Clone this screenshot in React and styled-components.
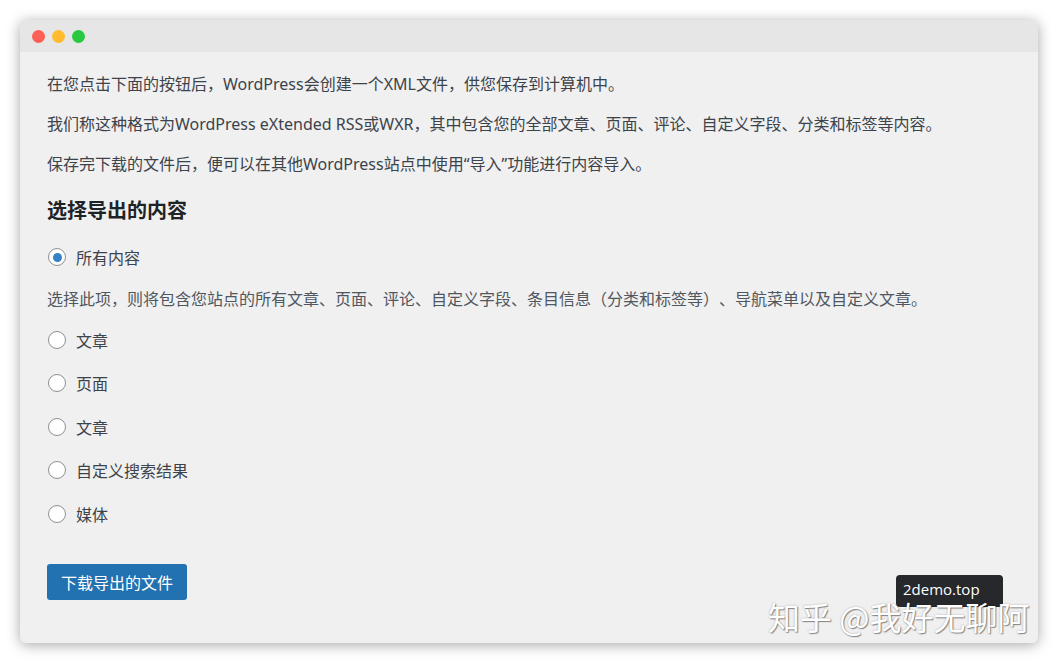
import React from "react";
import styled, { createGlobalStyle } from "styled-components";

const GlobalStyle = createGlobalStyle`
  html, body {
    margin: 0;
    padding: 0;
    background: #ffffff;
  }
  body {
    font-family: "Noto Sans", "Noto Sans CJK SC", sans-serif;
    color: #3c434a;
    text-spacing-trim: space-all;
  }
`;

const Page = styled.div`
  position: relative;
  width: 1058px;
  height: 663px;
  padding: 20px;
  box-sizing: border-box;
  overflow: hidden;
`;

const Window = styled.div`
  display: flex;
  flex-direction: column;
  height: 623px;
  background: #f0f0f1;
  border-radius: 6px;
  overflow: hidden;
  box-shadow: 0 2px 14px rgba(0, 0, 0, 0.35);
`;

const TitleBar = styled.div`
  display: flex;
  align-items: center;
  gap: 7px;
  height: 32px;
  padding-left: 12px;
  background: #e6e6e6;
  flex-shrink: 0;
`;

const Dot = styled.span`
  width: 13px;
  height: 13px;
  border-radius: 50%;
  background: ${(p) => p.color};
`;

const Content = styled.div`
  display: flex;
  flex-direction: column;
  padding: 20px 27px 0;
`;

const Para = styled.p`
  margin: 0 0 16px;
  font-size: 16px;
  line-height: 24px;
  color: #3c434a;
`;

const Heading = styled.h2`
  margin: 4px 0 19px;
  font-size: 20px;
  line-height: 30px;
  font-weight: 700;
  color: #1d2327;
`;

const RadioList = styled.div`
  display: flex;
  flex-direction: column;
  gap: 19.6px;
`;

const RadioRow = styled.label`
  display: flex;
  align-items: center;
  gap: 10px;
  height: 24px;
  padding-left: 1px;
  font-size: 16px;
  color: #3c434a;
`;

const RadioCircle = styled.span`
  position: relative;
  width: 18px;
  height: 18px;
  box-sizing: border-box;
  border: 1px solid #8c8f94;
  border-radius: 50%;
  background: #ffffff;
  flex-shrink: 0;

  &::after {
    content: "";
    display: ${(p) => (p.checked ? "block" : "none")};
    position: absolute;
    left: 3.5px;
    top: 3.5px;
    width: 9px;
    height: 9px;
    border-radius: 50%;
    background: #3582c4;
  }
`;

const Description = styled.p`
  margin: -2px 0 -2.5px;
  font-size: 16px;
  line-height: 24px;
  color: #50575e;
`;

const Button = styled.button`
  align-self: flex-start;
  margin-top: 38px;
  height: 36px;
  padding: 0 14px;
  border: 0;
  border-radius: 3px;
  background: #2271b1;
  color: #ffffff;
  font-family: inherit;
  font-size: 16px;
  cursor: pointer;
`;

const Tooltip = styled.div`
  position: absolute;
  left: 896px;
  top: 575px;
  width: 107px;
  height: 32px;
  box-sizing: border-box;
  padding: 3px 7px;
  background: #26282c;
  border-radius: 4px;
  color: #ffffff;
  font-family: "Open Sans", "Noto Sans", sans-serif;
  font-size: 15px;
  line-height: 22px;
`;

const Watermark = styled.div`
  position: absolute;
  left: 768px;
  top: 596px;
  font-family: "Noto Sans CJK SC", sans-serif;
  font-size: 32px;
  line-height: 40px;
  color: #ffffff;
  white-space: pre;
  text-shadow: 1px 1px 1px rgba(0, 0, 0, 0.4), 0 0 2px rgba(0, 0, 0, 0.3);
`;

const Radio = ({ label, checked }) => (
  <RadioRow>
    <RadioCircle checked={checked} />
    {label}
  </RadioRow>
);

export default function App() {
  return (
    <>
      <GlobalStyle />
      <Page>
        <Window>
          <TitleBar>
            <Dot color="#fe5f57" />
            <Dot color="#febc2e" />
            <Dot color="#28c840" />
          </TitleBar>
          <Content>
            <Para>在您点击下面的按钮后，WordPress会创建一个XML文件，供您保存到计算机中。</Para>
            <Para>我们称这种格式为WordPress eXtended RSS或WXR，其中包含您的全部文章、页面、评论、自定义字段、分类和标签等内容。</Para>
            <Para>保存完下载的文件后，便可以在其他WordPress站点中使用“导入”功能进行内容导入。</Para>
            <Heading>选择导出的内容</Heading>
            <RadioList>
              <Radio label="所有内容" checked />
              <Description>
                选择此项，则将包含您站点的所有文章、页面、评论、自定义字段、条目信息（分类和标签等）、导航菜单以及自定义文章。
              </Description>
              <Radio label="文章" />
              <Radio label="页面" />
              <Radio label="文章" />
              <Radio label="自定义搜索结果" />
              <Radio label="媒体" />
            </RadioList>
            <Button>下载导出的文件</Button>
          </Content>
        </Window>
        <Tooltip>2demo.top</Tooltip>
        <Watermark>知乎 @我好无聊阿</Watermark>
      </Page>
    </>
  );
}
